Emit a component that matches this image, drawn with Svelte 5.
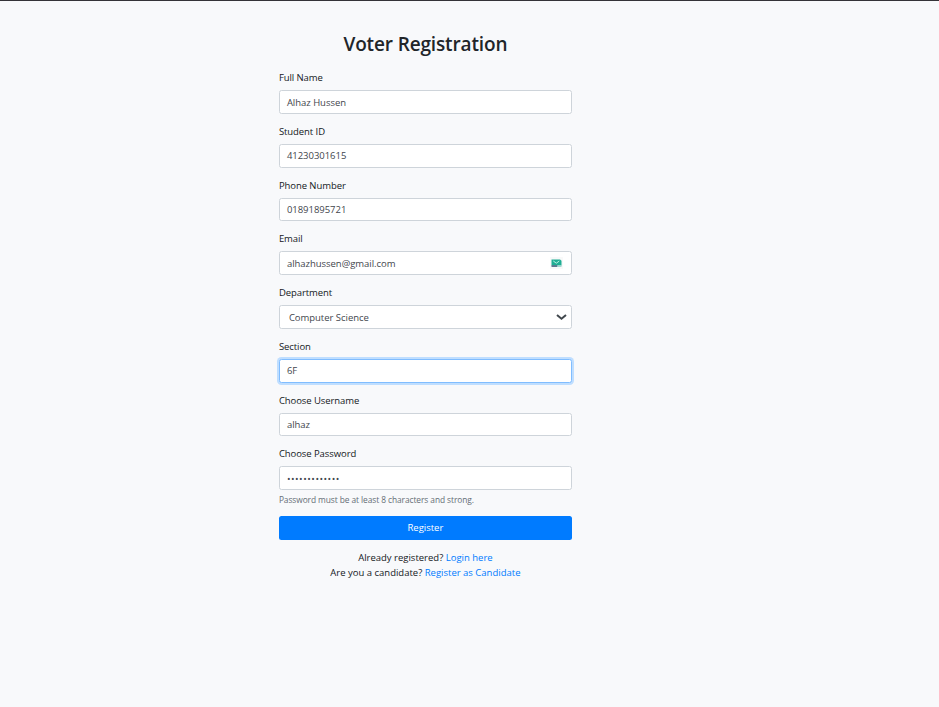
<script>
  const fields = [
    { id: 'name', label: 'Full Name', value: 'Alhaz Hussen', type: 'text' },
    { id: 'student', label: 'Student ID', value: '41230301615', type: 'text' },
    { id: 'phone', label: 'Phone Number', value: '01891895721', type: 'text' },
    { id: 'email', label: 'Email', value: 'alhazhussen@gmail.com', type: 'email' },
    { id: 'department', label: 'Department', value: 'Computer Science', type: 'select' },
    { id: 'section', label: 'Section', value: '6F', type: 'text', focused: true },
    { id: 'username', label: 'Choose Username', value: 'alhaz', type: 'text' },
    { id: 'password', label: 'Choose Password', value: '•••••••••••••', type: 'password' }
  ];
</script>

<main>
  <form onsubmit={(e) => e.preventDefault()}>
    <h2>Voter Registration</h2>
    {#each fields as f}
      <div class="group">
        <div class="label">{f.label}</div>
        <div class="control {f.type}" class:focused={f.focused}>
          <span>{f.value}</span>
          {#if f.type === 'email'}
            <svg class="mail" width="13" height="12" viewBox="0 0 13 12">
              <rect width="13" height="12" fill="#f8f9f9" />
              <path d="M1.5 2.4H10l1.5 1.4V8.4h-10z" fill="#1fae94" />
              <path d="M1.5 8.2h6v1.7h-6z" fill="#4b6a84" />
              <path d="M7.5 8.2h4v1.7h-4z" fill="#9bd5cc" />
              <path d="M3.3 4 6.3 6.2l3-2.2" fill="none" stroke="#b9eee2" stroke-width="1" />
            </svg>
          {:else if f.type === 'select'}
            <svg class="chevron" width="11" height="8" viewBox="0 0 11 8">
              <path d="M1 2 5.5 5.8 10 2" fill="none" stroke="#41474d" stroke-width="2" />
            </svg>
          {/if}
        </div>
      </div>
    {/each}
    <small>Password must be at least 8 characters and strong.</small>
    <button type="submit">Register</button>
    <div class="links">
      <p>Already registered? <a href="#login">Login here</a></p>
      <p>Are you a candidate? <a href="#candidate">Register as Candidate</a></p>
    </div>
  </form>
</main>

<style>
  :global(body) {
    margin: 0;
    background: #f8f9fb;
  }
  main {
    box-sizing: border-box;
    height: 707px;
    overflow: hidden;
    border-top: 1px solid #343338;
    background: #f8f9fb;
    color: #14181c;
    font: 9.5px/15px 'Segoe UI', 'Open Sans', 'Noto Sans', sans-serif;
    padding: 30.2px 0 0 278.9px;
  }
  form {
    width: 293px;
    display: flex;
    flex-direction: column;
  }
  h2 {
    margin: 1px 0 14px;
    font-size: 19px;
    line-height: 24px;
    font-weight: 600;
    letter-spacing: -0.14px;
    text-align: center;
    color: #212529;
  }
  .group {
    margin-bottom: 10px;
  }
  .label {
    height: 15px;
    margin-bottom: 5px;
    letter-spacing: -0.07px;
  }
  .control {
    box-sizing: border-box;
    height: 23.75px;
    display: flex;
    align-items: center;
    justify-content: space-between;
    padding: 0 7.5px 0 7px;
    border: 1px solid #ced4da;
    border-radius: 2.5px;
    background: #fff;
    color: #3f464d;
    letter-spacing: -0.03px;
  }
  .select {
    padding: 0 4px 0 9px;
  }
  .email {
    padding-right: 8px;
  }
  .focused {
    border-color: #80bdff;
    box-shadow: 0 0 0 2px #bfdeff;
  }
  .password span {
    letter-spacing: 0.5px;
    padding-top: 1px;
  }
  small {
    margin-top: -7.5px;
    font-size: 8.4px;
    line-height: 13.3px;
    letter-spacing: -0.08px;
    color: #656e76;
  }
  button {
    margin: 10px 0;
    height: 23.75px;
    padding: 0;
    border: 0;
    border-radius: 2.5px;
    background: #007bff;
    color: #fff;
    font: inherit;
    font-weight: 500;
  }
  .links {
    text-align: center;
  }
  p {
    margin: 0;
  }
  a {
    color: #007bff;
    text-decoration: none;
  }
</style>
